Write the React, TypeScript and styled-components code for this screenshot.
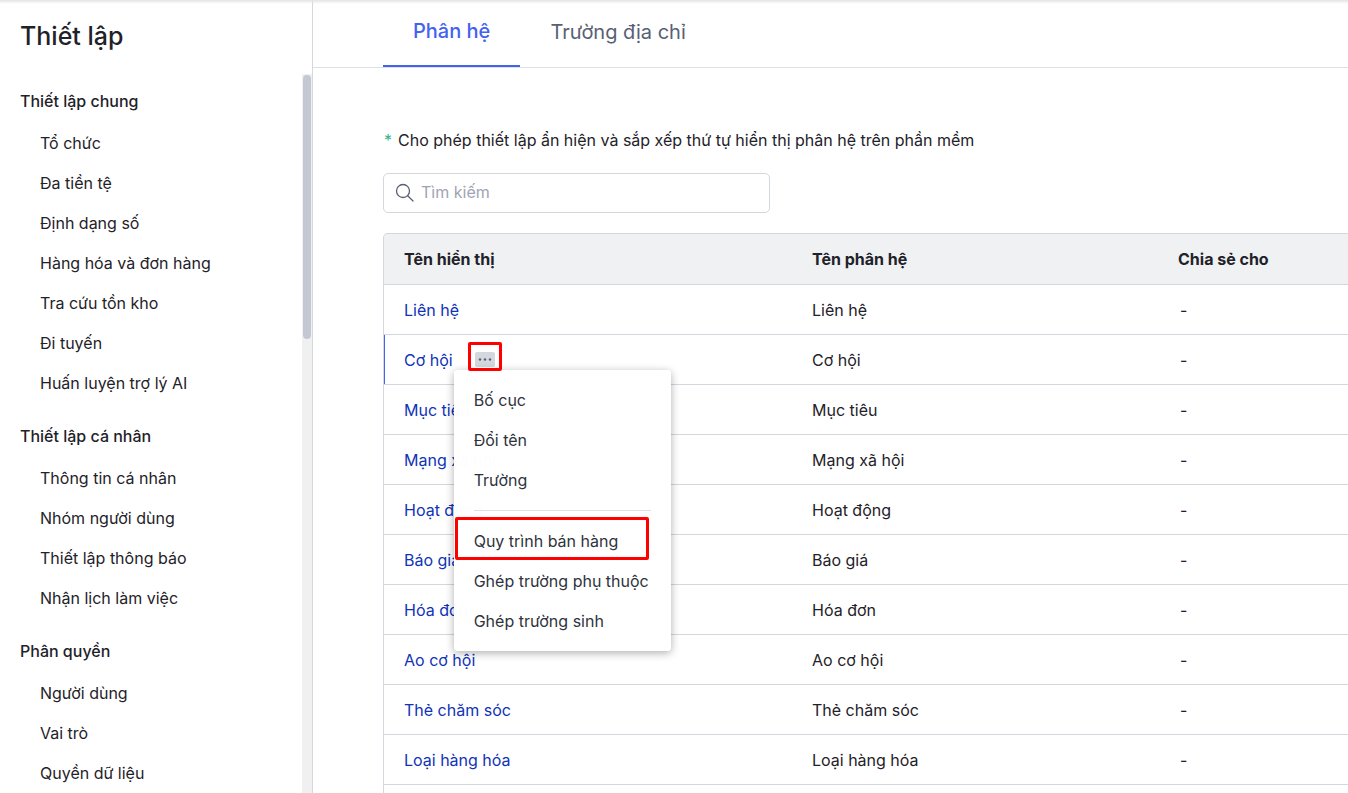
import React from "react";
import styled, { createGlobalStyle } from "styled-components";

const GlobalStyle = createGlobalStyle`
  *, *::before, *::after { box-sizing: border-box; }
  body {
    margin: 0;
    background: #fff;
    color: #1f2229;
    font-family: Inter, "Liberation Sans", sans-serif;
    font-size: 16px;
    line-height: 24px;
  }
`;

const Page = styled.div`
  display: flex;
  height: 100vh;
  overflow: hidden;
`;

const TopShade = styled.div`
  position: absolute;
  top: 0;
  left: 0;
  right: 0;
  height: 4px;
  background: linear-gradient(#e4e4e4, #fff0);
`;

const Sidebar = styled.aside`
  display: flex;
  flex-direction: column;
  flex: 0 0 313px;
  border-right: 1px solid #d3d7de;
`;

const Title = styled.h1`
  margin: 0;
  padding: 20px 20px 22px;
  font-size: 25px;
  line-height: 32px;
  font-weight: 500;
`;

const ScrollArea = styled.div`
  display: flex;
  flex: 1;
  min-height: 0;
`;

const Nav = styled.nav`
  flex: 1;
  padding-top: 5px;
  overflow: hidden;
`;

const ScrollTrack = styled.div`
  flex: 0 0 10px;
  padding: 1px;
  background: #f0f0f0;
`;

const ScrollThumb = styled.div`
  height: 264px;
  border-radius: 4px;
  background: #c4c8d3;
`;

const Group = styled.section`
  margin-bottom: 11px;
`;

const GroupTitle = styled.h2`
  margin: 0;
  padding: 0 20px;
  font-size: 16px;
  line-height: 44px;
  font-weight: 500;
`;

const NavList = styled.ul`
  margin: 0;
  padding: 0;
  list-style: none;
`;

const NavLink = styled.a`
  display: block;
  padding: 0 40px;
  line-height: 40px;
  color: inherit;
  text-decoration: none;
`;

const Main = styled.main`
  flex: 1;
  min-width: 0;
  overflow: hidden;
`;

const Tabs = styled.div`
  display: flex;
  height: 68px;
  padding-left: 70px;
  border-bottom: 1px solid #dcdfe3;
`;

const Tab = styled.button<{ $active?: boolean }>`
  height: 67px;
  padding: ${(p) => (p.$active ? "0 30px 3px" : "0 30px")};
  border: 0;
  border-bottom: ${(p) => (p.$active ? "2px solid #4262f0" : "3px solid transparent")};
  background: none;
  color: ${(p) => (p.$active ? "#4262f0" : "#586074")};
  font: ${(p) => (p.$active ? 500 : 400)} 20px/28px Inter, sans-serif;
`;

const Content = styled.div`
  padding: 60px 0 0 70px;
`;

const Note = styled.p`
  margin: 0 0 21px;
  padding-left: 1px;
`;

const Star = styled.span`
  margin-right: 6px;
  color: #31b491;
`;

const SearchBox = styled.label`
  display: flex;
  align-items: center;
  gap: 6px;
  width: 387px;
  height: 40px;
  margin-bottom: 20px;
  padding: 0 10px;
  border: 1px solid #d3d7de;
  border-radius: 5px;
`;

const SearchInput = styled.input`
  flex: 1;
  min-width: 0;
  padding: 0 0 2px;
  border: 0;
  outline: 0;
  background: none;
  font: inherit;
  &::placeholder { color: #9fa4b4; opacity: 1; }
`;

const Table = styled.table`
  width: 100%;
  table-layout: fixed;
  border-collapse: separate;
  border-spacing: 0;
  border-left: 1px solid #d3d7de;
  border-top-left-radius: 5px;
`;

const Th = styled.th<{ $width?: number }>`
  width: ${(p) => (p.$width ? `${p.$width}px` : "auto")};
  height: 52px;
  padding: 0 20px;
  border-top: 1px solid #d3d7de;
  border-bottom: 1px solid #d3d7de;
  background: #f0f1f3;
  font-weight: 700;
  text-align: left;
  white-space: nowrap;
  &:first-child { border-top-left-radius: 4px; }
`;

const Td = styled.td<{ $active?: boolean; $indent?: boolean }>`
  height: 50px;
  padding: 0 20px;
  padding-left: ${(p) => (p.$indent ? 22 : 20)}px;
  border-bottom: 1px solid #d3d7de;
  box-shadow: ${(p) => (p.$active ? "inset 1px 0 #4262f0" : "none")};
`;

const NameLink = styled.a`
  color: #1033b8;
  text-decoration: none;
`;

const MenuAnchor = styled.span`
  display: inline-flex;
  position: relative;
  margin: 0 0 4px 22px;
  vertical-align: middle;
`;

const MoreButton = styled.button`
  display: flex;
  align-items: center;
  justify-content: center;
  width: 20px;
  height: 15px;
  padding: 0;
  border: 0;
  border-radius: 2px;
  background: #d3d7de;
`;

const Highlight = styled.span<{ $inset: string }>`
  position: absolute;
  inset: ${(p) => p.$inset};
  z-index: 2;
  border: 3px solid #f00;
  border-radius: 2px;
  pointer-events: none;
`;

const Menu = styled.div`
  position: absolute;
  top: 18px;
  left: -21px;
  z-index: 1;
  min-width: 217px;
  padding: 10px 0;
  border-radius: 4px;
  background: #fffffffc;
  box-shadow: 0 2px 8px rgba(0, 0, 0, 0.32);
`;

const MenuItem = styled.button`
  display: block;
  position: relative;
  width: 100%;
  padding: 0 20px;
  border: 0;
  background: none;
  color: #2f333d;
  font: 400 16px/40px Inter, sans-serif;
  text-align: left;
  white-space: nowrap;
`;

const Divider = styled.hr`
  height: 1px;
  margin: 10px 20px;
  border: 0;
  background: #dcdfe3;
`;

const groups = [
  {
    title: "Thiết lập chung",
    items: ["Tổ chức", "Đa tiền tệ", "Định dạng số", "Hàng hóa và đơn hàng", "Tra cứu tồn kho", "Đi tuyến", "Huấn luyện trợ lý AI"],
  },
  {
    title: "Thiết lập cá nhân",
    items: ["Thông tin cá nhân", "Nhóm người dùng", "Thiết lập thông báo", "Nhận lịch làm việc"],
  },
  { title: "Phân quyền", items: ["Người dùng", "Vai trò", "Quyền dữ liệu"] },
];

const modules = [
  "Liên hệ", "Cơ hội", "Mục tiêu", "Mạng xã hội", "Hoạt động", "Báo giá",
  "Hóa đơn", "Ao cơ hội", "Thẻ chăm sóc", "Loại hàng hóa",
];

const activeModule = "Cơ hội";

function RowMenu() {
  return (
    <MenuAnchor>
      <MoreButton type="button" aria-label="Tùy chọn">
        <svg width="14" height="3" viewBox="0 0 14 3" fill="#586074">
          <circle cx="2" cy="1.5" r="1.2" />
          <circle cx="7" cy="1.5" r="1.2" />
          <circle cx="12" cy="1.5" r="1.2" />
        </svg>
      </MoreButton>
      <Menu role="menu">
        <MenuItem role="menuitem">Bố cục</MenuItem>
        <MenuItem role="menuitem">Đổi tên</MenuItem>
        <MenuItem role="menuitem">Trường</MenuItem>
        <Divider />
        <MenuItem role="menuitem">
          Quy trình bán hàng
          <Highlight $inset="-4px 22px 1px 1px" />
        </MenuItem>
        <MenuItem role="menuitem">Ghép trường phụ thuộc</MenuItem>
        <MenuItem role="menuitem">Ghép trường sinh</MenuItem>
      </Menu>
      <Highlight $inset="-10px -7px -4px -7px" />
    </MenuAnchor>
  );
}

export default function App() {
  return (
    <>
      <GlobalStyle />
      <Page>
        <Sidebar>
          <Title>Thiết lập</Title>
          <ScrollArea>
            <Nav>
              {groups.map((group) => (
                <Group key={group.title}>
                  <GroupTitle>{group.title}</GroupTitle>
                  <NavList>
                    {group.items.map((item) => (
                      <li key={item}>
                        <NavLink href="#">{item}</NavLink>
                      </li>
                    ))}
                  </NavList>
                </Group>
              ))}
            </Nav>
            <ScrollTrack>
              <ScrollThumb />
            </ScrollTrack>
          </ScrollArea>
        </Sidebar>
        <Main>
          <Tabs role="tablist">
            <Tab role="tab" aria-selected="true" $active>Phân hệ</Tab>
            <Tab role="tab" aria-selected="false">Trường địa chỉ</Tab>
          </Tabs>
          <Content>
            <Note>
              <Star>*</Star>
              Cho phép thiết lập ẩn hiện và sắp xếp thứ tự hiển thị phân hệ trên phần mềm
            </Note>
            <SearchBox>
              <svg width="21" height="20" viewBox="0 0 21 20" fill="none" stroke="#586074" strokeWidth="1.3" strokeLinecap="round">
                <circle cx="9" cy="8" r="6.5" />
                <path d="M13.7 12.7 19 18" />
              </svg>
              <SearchInput type="text" placeholder="Tìm kiếm" aria-label="Tìm kiếm" />
            </SearchBox>
            <Table>
              <thead>
                <tr>
                  <Th $width={408}>Tên hiển thị</Th>
                  <Th $width={366}>Tên phân hệ</Th>
                  <Th>Chia sẻ cho</Th>
                </tr>
              </thead>
              <tbody>
                {modules.map((name) => (
                  <tr key={name}>
                    <Td $active={name === activeModule}>
                      <NameLink href="#">{name}</NameLink>
                      {name === activeModule && <RowMenu />}
                    </Td>
                    <Td>{name}</Td>
                    <Td $indent>-</Td>
                  </tr>
                ))}
                <tr>
                  <Td />
                  <Td />
                  <Td />
                </tr>
              </tbody>
            </Table>
          </Content>
        </Main>
        <TopShade />
      </Page>
    </>
  );
}
